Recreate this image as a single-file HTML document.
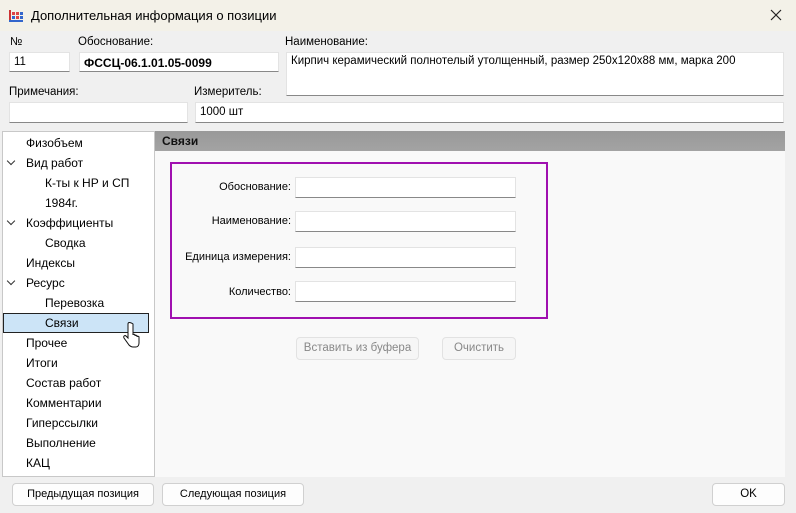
<!DOCTYPE html><html><head><meta charset="utf-8"><style>
*{box-sizing:border-box}body{margin:0;width:796px;height:513px;background:#f0f0f0;font-family:"Liberation Sans",sans-serif;font-size:12px;color:#000;position:relative;overflow:hidden}
.a{position:absolute}.in{position:absolute;background:#fff;border:1px solid #e3e3e3;border-bottom:1px solid #888;padding:3px 4px;font-size:11.5px;white-space:nowrap}
.lb{position:absolute;font-size:11.5px;white-space:nowrap}
.btn{position:absolute;background:#fdfdfd;border:1px solid #d0d0d0;border-radius:4px;font-size:11.5px;text-align:center;line-height:20px}
.ti{position:absolute;font-size:12px;white-space:nowrap}
.chev{position:absolute;left:8px;width:6px;height:6px;border-right:1.3px solid #333;border-bottom:1.3px solid #333;transform:rotate(45deg)}
</style></head><body>
<div class="a" style="left:0;top:0;width:796px;height:31px;background:#f3f1e8"></div>
<svg class="a" style="left:9px;top:8px" width="14" height="14"><rect x="0" y="2" width="2" height="12" fill="#c33"/><rect x="3" y="4" width="3" height="3" fill="#d44"/><rect x="7" y="4" width="3" height="3" fill="#d44"/><rect x="11" y="4" width="3" height="3" fill="#36c"/><rect x="3" y="8" width="3" height="3" fill="#36c"/><rect x="7" y="8" width="3" height="3" fill="#d44"/><rect x="11" y="8" width="3" height="3" fill="#36c"/><rect x="0" y="12" width="14" height="2" fill="#36c"/></svg>
<div class="a" style="left:31px;top:8px;font-size:13px">Дополнительная информация о позиции</div>
<svg class="a" style="left:770px;top:9px" width="12" height="12"><path d="M1 1L11 11M11 1L1 11" stroke="#222" stroke-width="1.2"/></svg>
<div class="lb" style="left:10px;top:36px">№</div>
<div class="in" style="left:9px;top:52px;width:61px;height:20px">11</div>
<div class="lb" style="left:78px;top:36px">Обоснование:</div>
<div class="in" style="left:79px;top:52px;width:200px;height:20px;font-weight:bold;font-size:12px">ФССЦ-06.1.01.05-0099</div>
<div class="lb" style="left:285px;top:36px">Наименование:</div>
<div class="in" style="left:286px;top:52px;width:498px;height:44px;padding-top:2px">Кирпич керамический полнотелый утолщенный, размер 250x120x88 мм, марка 200</div>
<div class="lb" style="left:9px;top:86px">Примечания:</div>
<div class="in" style="left:9px;top:102px;width:179px;height:21px"></div>
<div class="lb" style="left:194px;top:86px">Измеритель:</div>
<div class="in" style="left:195px;top:102px;width:589px;height:21px">1000 шт</div>
<div class="a" style="left:2px;top:131px;width:153px;height:346px;background:#fff;border:1px solid #c8c8c8"></div>
<div class="a" style="left:3px;top:313px;width:146px;height:20px;background:#cce4f7;border:1px solid #222"></div>
<div class="ti" style="left:26px;top:136px">Физобъем</div>
<div class="chev" style="top:158px"></div><div class="ti" style="left:26px;top:156px">Вид работ</div>
<div class="ti" style="left:45px;top:176px">К-ты к НР и СП</div>
<div class="ti" style="left:45px;top:196px">1984г.</div>
<div class="chev" style="top:218px"></div><div class="ti" style="left:26px;top:216px">Коэффициенты</div>
<div class="ti" style="left:45px;top:236px">Сводка</div>
<div class="ti" style="left:26px;top:256px">Индексы</div>
<div class="chev" style="top:278px"></div><div class="ti" style="left:26px;top:276px">Ресурс</div>
<div class="ti" style="left:45px;top:296px">Перевозка</div>
<div class="ti" style="left:45px;top:316px">Связи</div>
<div class="ti" style="left:26px;top:336px">Прочее</div>
<div class="ti" style="left:26px;top:356px">Итоги</div>
<div class="ti" style="left:26px;top:376px">Состав работ</div>
<div class="ti" style="left:26px;top:396px">Комментарии</div>
<div class="ti" style="left:26px;top:416px">Гиперссылки</div>
<div class="ti" style="left:26px;top:436px">Выполнение</div>
<div class="ti" style="left:26px;top:456px">КАЦ</div>
<svg class="a" style="left:123px;top:322px" width="18" height="28"><path d="M5 2v14l-2-2c-1-1-3 0-2 2l5 7c1 1 2 2 4 2h3c2 0 3-2 3-4v-6c0-1-2-1-2 0v-1c0-1-2-1-2 0v-1c0-1-2-1-2 0V2C7 0 5 0 5 2z" fill="#fff" stroke="#111" stroke-width="1"/></svg>
<div class="a" style="left:155px;top:131px;width:630px;height:346px;background:#f9f9f9"></div>
<div class="a" style="left:155px;top:131px;width:630px;height:20px;background:linear-gradient(#999,#a3a3a3)"></div>
<div class="a" style="left:162px;top:134px;font-weight:bold;font-size:12px;color:#111">Связи</div>
<div class="a" style="left:170px;top:162px;width:378px;height:157px;border:2px solid #a010b0"></div>
<div class="lb" style="left:170px;width:121px;text-align:right;top:181px;font-size:11px">Обоснование:</div>
<div class="lb" style="left:170px;width:121px;text-align:right;top:215px;font-size:11px">Наименование:</div>
<div class="lb" style="left:170px;width:121px;text-align:right;top:251px;font-size:11px">Единица измерения:</div>
<div class="lb" style="left:170px;width:121px;text-align:right;top:286px;font-size:11px">Количество:</div>
<div class="in" style="left:295px;top:177px;width:221px;height:21px"></div>
<div class="in" style="left:295px;top:211px;width:221px;height:21px"></div>
<div class="in" style="left:295px;top:247px;width:221px;height:21px"></div>
<div class="in" style="left:295px;top:281px;width:221px;height:21px"></div>
<div class="btn" style="left:296px;top:337px;width:123px;height:23px;color:#888;background:#f6f6f6;border-color:#e2e2e2">Вставить из буфера</div>
<div class="btn" style="left:442px;top:337px;width:74px;height:23px;color:#888;background:#f6f6f6;border-color:#e2e2e2">Очистить</div>
<div class="btn" style="left:12px;top:483px;width:142px;height:23px;font-size:11px">Предыдущая позиция</div>
<div class="btn" style="left:162px;top:483px;width:142px;height:23px;font-size:11px">Следующая позиция</div>
<div class="btn" style="left:712px;top:483px;width:73px;height:23px">OK</div>
</body></html>
